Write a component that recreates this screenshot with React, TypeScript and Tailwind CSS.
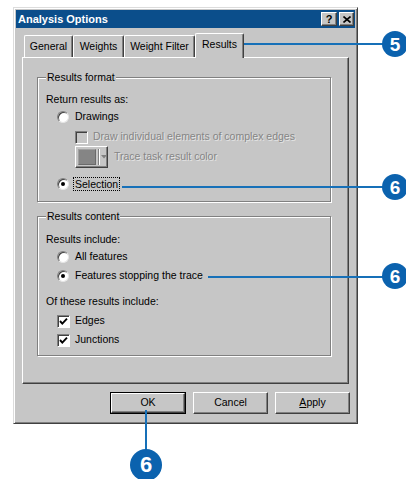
import React from "react";

const raised =
  "border border-t-white border-l-white border-r-[#404040] border-b-[#404040] shadow-[inset_-1px_-1px_0_#808080]";

function Radio({ checked }: { checked?: boolean }) {
  return (
    <div className="w-[12px] h-[12px] rounded-full bg-white border border-t-[#808080] border-l-[#808080] border-r-[#e6e6e6] border-b-[#e6e6e6] shadow-[inset_1px_1px_0_#404040] flex items-center justify-center shrink-0">
      {checked && <div className="w-[4px] h-[4px] rounded-full bg-black" />}
    </div>
  );
}

function Check({ checked, disabled }: { checked?: boolean; disabled?: boolean }) {
  return (
    <div
      className={`w-[13px] h-[13px] border border-t-[#808080] border-l-[#808080] border-r-white border-b-white shadow-[inset_1px_1px_0_#404040] flex items-center justify-center shrink-0 ${
        disabled ? "bg-[#c6c6c6]" : "bg-white"
      }`}
    >
      {checked && (
        <svg width="9" height="9" viewBox="0 0 9 9">
          <polyline points="1,4 3.3,6.6 8,1.6" fill="none" stroke="#000" strokeWidth="1.9" />
        </svg>
      )}
    </div>
  );
}

function Tab({ label, w, selected }: { label: string; w: string; selected?: boolean }) {
  return (
    <div
      className={`${w} ${
        selected ? "h-[25px] -mb-[1px] relative z-10 pt-[1px]" : "h-[22px]"
      } bg-[#c6c6c6] border-t border-l border-t-white border-l-white border-r border-r-[#404040] rounded-t-[2px] shadow-[inset_-1px_0_0_#808080] flex items-center justify-center shrink-0`}
    >
      <span className={selected ? "-mt-[3px]" : ""}>{label}</span>
    </div>
  );
}

function GroupBox({
  title,
  className,
  children,
}: {
  title: string;
  className: string;
  children: React.ReactNode;
}) {
  return (
    <div
      className={`relative w-[294px] border border-[#808080] shadow-[inset_1px_1px_0_#fff,1px_1px_0_#fff] ${className}`}
    >
      <span className="absolute left-[8px] -top-[9px] bg-[#c6c6c6] px-[1px] leading-[16px]">
        {title}
      </span>
      {children}
    </div>
  );
}

function Button({ children, def }: { children: React.ReactNode; def?: boolean }) {
  const inner = (
    <div className={`${def ? "w-[74px] h-[20px]" : "w-[75px] h-[22px]"} ${raised} flex items-center justify-center`}>
      {children}
    </div>
  );
  if (def) return <div className="border border-black">{inner}</div>;
  return inner;
}

export default function App() {
  return (
    <div className="relative w-[406px] h-[479px] bg-white overflow-hidden font-['Liberation_Sans',Arial,sans-serif] text-[10.5px] text-black">
      <div className="ml-[13px] mt-[7px] w-[345px] h-[417px] bg-[#c6c6c6] border border-t-[#dcdcdc] border-l-[#dcdcdc] border-r-[#404040] border-b-[#404040] shadow-[inset_1px_1px_0_#fff,inset_-1px_-1px_0_#808080] p-[2px] flex flex-col">
        {/* Title bar */}
        <div className="h-[18px] bg-[#0b4e8b] flex items-center justify-between pl-[2px] pr-[1px] shrink-0">
          <span className="text-white font-bold text-[11px] leading-none">Analysis Options</span>
          <div className="flex gap-[2px]">
            <div className={`w-[16px] h-[14px] bg-[#c6c6c6] ${raised} flex items-center justify-center text-[11px] font-bold leading-none`}>
              ?
            </div>
            <div className={`w-[15px] h-[14px] bg-[#c6c6c6] ${raised} flex items-center justify-center`}>
              <svg width="8" height="7" viewBox="0 0 8 7">
                <path d="M0.5 0.5 L7.5 6.5 M7.5 0.5 L0.5 6.5" stroke="#000" strokeWidth="1.6" />
              </svg>
            </div>
          </div>
        </div>

        {/* Tabs */}
        <div className="mt-[5px] h-[24px] flex items-end pl-[8px] shrink-0">
          <Tab label="General" w="w-[49px]" />
          <Tab label="Weights" w="w-[51px]" />
          <Tab label="Weight Filter" w="w-[71px]" />
          <Tab label="Results" w="w-[49px]" selected />
        </div>

        {/* Panel */}
        <div className="mx-[6px] h-[327px] border border-t-white border-l-white border-r-[#404040] border-b-[#404040] shadow-[inset_-1px_-1px_0_#808080] pl-[14px] pt-[19px] shrink-0">
          <GroupBox title="Results format" className="h-[125px] pl-[8px] pt-[14px]">
            <div className="h-[16px] flex items-center">Return results as:</div>
            <div className="mt-[1px] h-[16px] flex items-center pl-[11px] gap-[6px]">
              <Radio />
              <span>Drawings</span>
            </div>
            <div className="mt-[4px] h-[16px] flex items-center pl-[29px] gap-[5px]">
              <Check disabled />
              <span className="text-[#858585] [text-shadow:1px_1px_0_#ffffff90]">
                Draw individual elements of complex edges
              </span>
            </div>
            <div className="mt-[1px] h-[22px] flex items-center pl-[29px] gap-[6px]">
              <div className={`w-[33px] h-[22px] ${raised} flex items-center`}>
                <div className="ml-[2px] w-[18px] h-[16px] bg-[#858585] border border-t-[#a0a0a0] border-l-[#a0a0a0] border-r-[#6a6a6a] border-b-[#6a6a6a]" />
                <div className="ml-[2px] w-[1px] h-[16px] bg-[#808080] shadow-[1px_0_0_#fff]" />
                <svg className="ml-[2px]" width="6" height="4" viewBox="0 0 6 4">
                  <path d="M0 0 H6 L3 3.5 Z" fill="#808080" />
                </svg>
              </div>
              <span className="text-[#858585] [text-shadow:1px_1px_0_#ffffff90]">Trace task result color</span>
            </div>
            <div className="mt-[8px] h-[16px] flex items-center pl-[11px] gap-[4px]">
              <Radio checked />
              <span className="border border-dotted border-black px-[1px] leading-[12px]">Selection</span>
            </div>
          </GroupBox>

          <GroupBox title="Results content" className="mt-[14px] h-[140px] pl-[8px] pt-[15px]">
            <div className="h-[16px] flex items-center">Results include:</div>
            <div className="mt-[1px] h-[16px] flex items-center pl-[11px] gap-[6px]">
              <Radio />
              <span>All features</span>
            </div>
            <div className="mt-[3px] h-[16px] flex items-center pl-[11px] gap-[6px]">
              <Radio checked />
              <span>Features stopping the trace</span>
            </div>
            <div className="mt-[10px] h-[16px] flex items-center">Of these results include:</div>
            <div className="mt-[3px] h-[16px] flex items-center pl-[11px] gap-[5px]">
              <Check checked />
              <span>Edges</span>
            </div>
            <div className="mt-[3px] h-[16px] flex items-center pl-[11px] gap-[5px]">
              <Check checked />
              <span>Junctions</span>
            </div>
          </GroupBox>
        </div>

        {/* Buttons */}
        <div className="mt-[8px] mr-[5px] flex justify-end gap-[7px] shrink-0">
          <Button def>OK</Button>
          <Button>Cancel</Button>
          <Button>
            <span>
              <span className="underline">A</span>pply
            </span>
          </Button>
        </div>
      </div>

      {/* Callout leaders */}
      <div className="absolute left-[238px] top-[43px] w-[146px] h-[2px] bg-[#1670b8]" />
      <div className="absolute left-[382px] top-[31px] w-[26px] h-[26px] rounded-full bg-[#0b62ae] flex items-center justify-center text-white font-bold text-[19px] leading-none">
        5
      </div>

      <div className="absolute left-[122px] top-[186px] w-[262px] h-[2px] bg-[#1670b8]" />
      <div className="absolute left-[382px] top-[174px] w-[26px] h-[26px] rounded-full bg-[#0b62ae] flex items-center justify-center text-white font-bold text-[19px] leading-none">
        6
      </div>

      <div className="absolute left-[208px] top-[276px] w-[176px] h-[2px] bg-[#1670b8]" />
      <div className="absolute left-[382px] top-[263px] w-[26px] h-[26px] rounded-full bg-[#0b62ae] flex items-center justify-center text-white font-bold text-[19px] leading-none">
        6
      </div>

      <div className="absolute left-[145px] top-[410px] w-[2px] h-[42px] bg-[#1670b8]" />
      <div className="absolute left-[130px] top-[449px] w-[32px] h-[32px] rounded-full bg-[#0b62ae] flex items-center justify-center text-white font-bold text-[22px] leading-none">
        6
      </div>
    </div>
  );
}
